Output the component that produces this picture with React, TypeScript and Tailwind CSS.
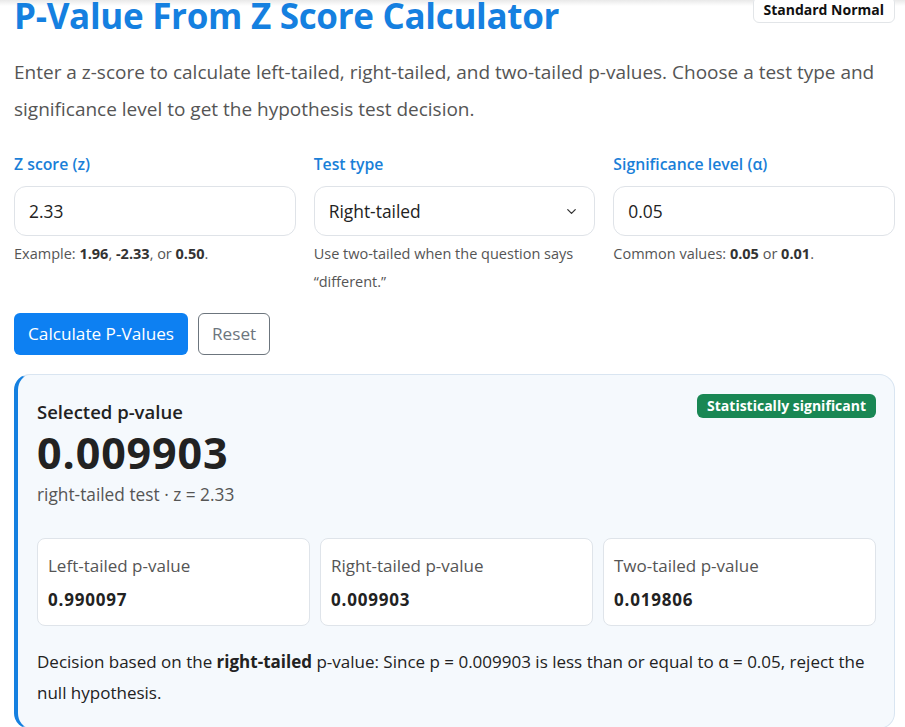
import { ChevronDown } from 'lucide-react';

const font = { fontFamily: '"Open Sans", "Liberation Sans", sans-serif' };

function Field({ label, children, help }: { label: string; children: React.ReactNode; help: React.ReactNode }) {
  return (
    <div className="flex flex-col">
      <label className="text-[15.8px] leading-[24px] font-semibold text-[#1a7fd8]">{label}</label>
      <div className="mt-[10px]">{children}</div>
      <p className="mt-[4px] text-[14.5px] leading-[28px] text-[#555]">{help}</p>
    </div>
  );
}

function TailBox({ label, value }: { label: string; value: string }) {
  return (
    <div className="bg-white border border-[#dfe4ea] rounded-lg px-[10px] pt-[13px] pb-[11px]">
      <div className="text-[17px] leading-[28px] text-[#555]">{label}</div>
      <div className="mt-[6px] text-[17px] leading-[28px] font-bold text-[#222] tracking-[0.8px]">{value}</div>
    </div>
  );
}

export default function App() {
  return (
    <div className="relative min-h-screen bg-white overflow-hidden" style={font}>
      {/* top shadow */}
      <div className="absolute inset-x-0 top-0 h-[6px] bg-gradient-to-b from-[#e9e9e9] to-white" />

      <div className="relative pl-[14px] pr-[10px]">
        {/* Header */}
        <div className="flex justify-between items-start">
          <h1 className="mt-[-7px] text-[35px] leading-[46px] font-bold text-[#1580e0] tracking-[-0.3px]">
            P-Value From Z Score Calculator
          </h1>
          <span className="mt-[-2px] px-[10px] pt-[1px] pb-[2px] bg-white border border-[#e2e5e8] rounded-b-md rounded-t-sm text-[14px] leading-[20px] font-bold text-[#111]">
            Standard Normal
          </span>
        </div>

        <p className="mt-[15px] text-[19px] leading-[37px] text-[#555]">
          Enter a z-score to calculate left-tailed, right-tailed, and two-tailed p-values. Choose a test type and
          significance level to get the hypothesis test decision.
        </p>

        {/* Inputs */}
        <div className="mt-[24px] grid grid-cols-3 gap-[18px]">
          <Field
            label="Z score (z)"
            help={
              <>
                Example: <b className="text-[#333]">1.96</b>, <b className="text-[#333]">-2.33</b>, or{' '}
                <b className="text-[#333]">0.50</b>.
              </>
            }
          >
            <input
              defaultValue="2.33"
              className="w-full h-[50px] px-[14px] border border-[#dfe3e8] rounded-[12px] text-[17.4px] text-[#222] outline-none"
              style={font}
            />
          </Field>
          <Field label="Test type" help={<>Use two-tailed when the question says “different.”</>}>
            <div className="relative">
              <select
                defaultValue="right"
                className="w-full h-[50px] pl-[14px] pr-[36px] border border-[#dfe3e8] rounded-[12px] text-[17.4px] text-[#222] bg-white appearance-none outline-none"
                style={font}
              >
                <option value="left">Left-tailed</option>
                <option value="right">Right-tailed</option>
                <option value="two">Two-tailed</option>
              </select>
              <ChevronDown className="absolute right-[16px] top-[18px] w-[15px] h-[15px] text-[#333] pointer-events-none" strokeWidth={2} />
            </div>
          </Field>
          <Field
            label="Significance level (α)"
            help={
              <>
                Common values: <b className="text-[#333]">0.05</b> or <b className="text-[#333]">0.01</b>.
              </>
            }
          >
            <input
              defaultValue="0.05"
              className="w-full h-[50px] px-[14px] border border-[#dfe3e8] rounded-[12px] text-[17.4px] text-[#222] outline-none"
              style={font}
            />
          </Field>
        </div>

        {/* Buttons */}
        <div className="mt-[17px] flex gap-[10px]">
          <button className="h-[42px] px-[14px] bg-[#0d80f2] text-white text-[17.2px] rounded-md" style={font}>
            Calculate P-Values
          </button>
          <button className="h-[42px] px-[13px] bg-white border border-[#6c757d] text-[#6c757d] text-[17.2px] rounded-md" style={font}>
            Reset
          </button>
        </div>

        {/* Result card */}
        <div className="mt-[19px] bg-[#f5f9fd] border border-[#d9e5f1] border-l-4 border-l-[#1580e0] rounded-2xl pl-[19px] pr-[18px] pt-[19px] pb-[20px]">
          <div className="flex justify-between items-start">
            <div>
              <div className="mt-[6px] text-[18.5px] leading-[24px] font-semibold text-[#222]">Selected p-value</div>
              <div className="mt-[3px] text-[43px] leading-[52px] font-bold text-[#222] tracking-[0.9px]">0.009903</div>
              <div className="mt-[3px] text-[17.3px] leading-[26px] text-[#555]">right-tailed test · z = 2.33</div>
            </div>
            <span className="px-[10px] py-[2px] bg-[#198754] text-white text-[14px] leading-[20px] font-bold rounded-md">
              Statistically significant
            </span>
          </div>

          <div className="mt-[30px] grid grid-cols-3 gap-[10px]">
            <TailBox label="Left-tailed p-value" value="0.990097" />
            <TailBox label="Right-tailed p-value" value="0.009903" />
            <TailBox label="Two-tailed p-value" value="0.019806" />
          </div>

          <p className="mt-[20px] text-[17px] leading-[31px] text-[#222]">
            Decision based on the <b>right-tailed</b> p-value: Since p = 0.009903 is less than or equal to α = 0.05, reject the
            null hypothesis.
          </p>
        </div>
      </div>
    </div>
  );
}
